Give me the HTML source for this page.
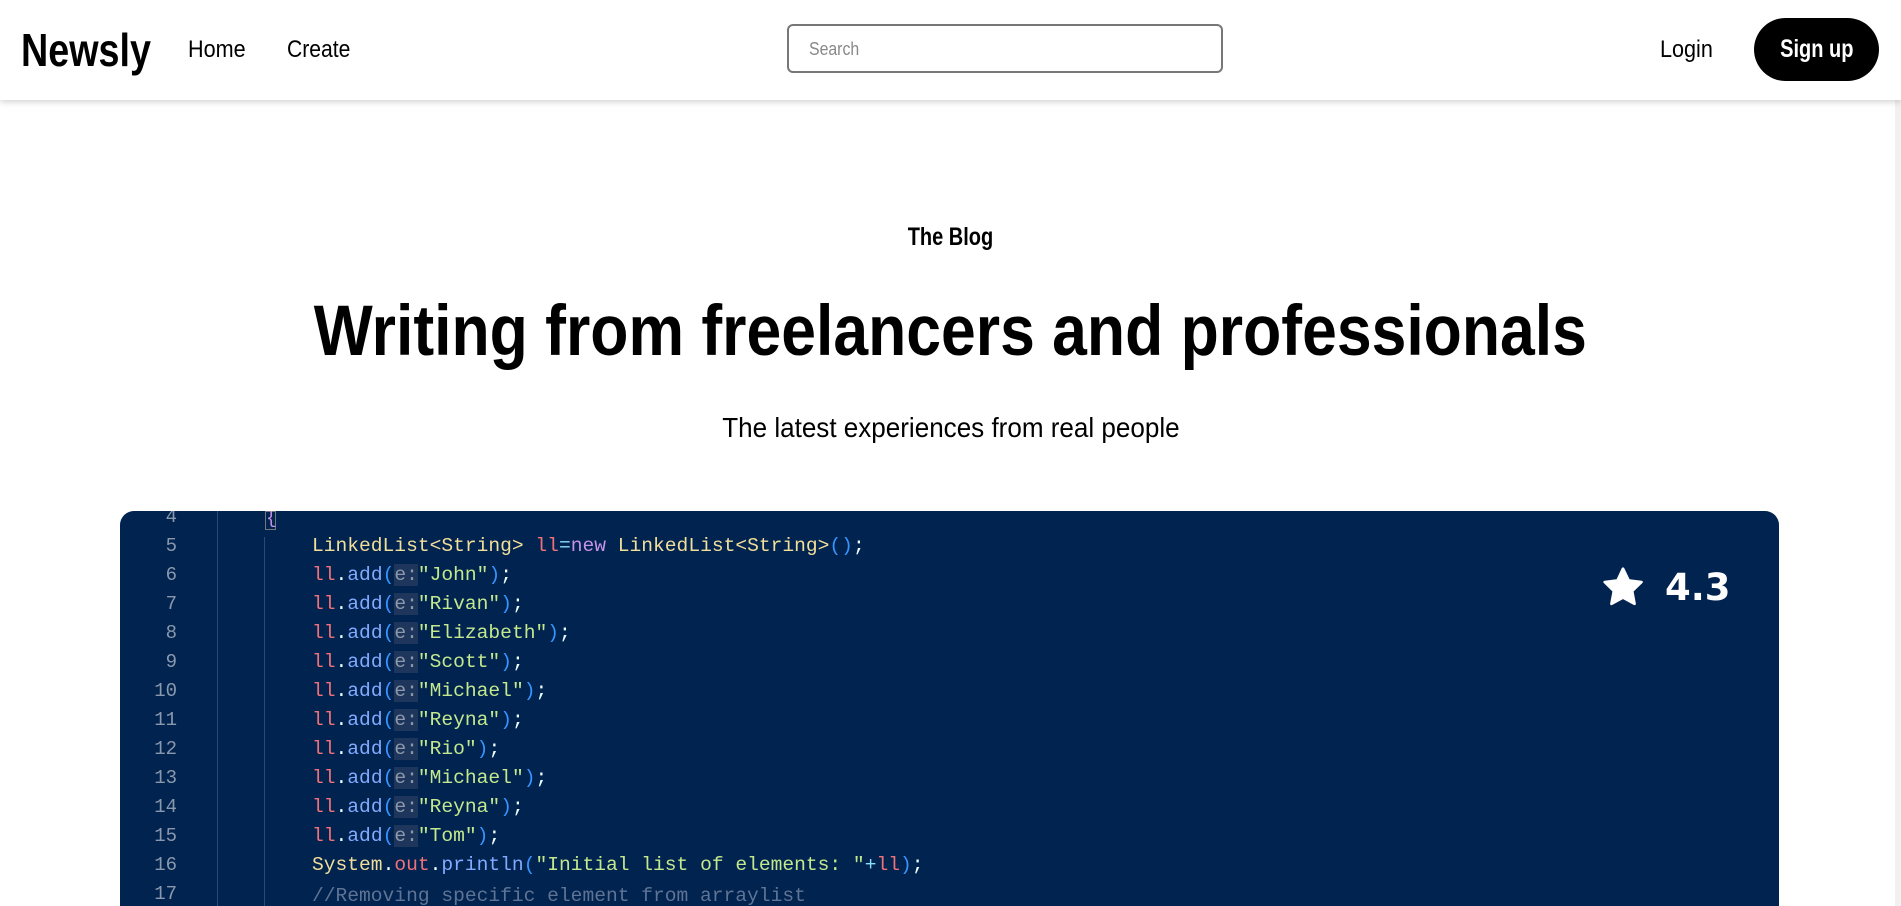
<!DOCTYPE html>
<html><head><meta charset="utf-8"><style>
*{margin:0;padding:0;box-sizing:border-box}
html,body{width:1901px;height:906px;overflow:hidden;background:#fff;font-family:"Liberation Sans",sans-serif;color:#000;position:relative}
.n{display:inline-block;transform-origin:left center;white-space:nowrap}
.nc{display:inline-block;transform-origin:center center;white-space:nowrap}
.nav{position:absolute;left:0;top:0;width:1901px;height:100px;background:#fff;box-shadow:0 2px 6px rgba(0,0,0,.18);z-index:2}
.logo{position:absolute;left:21px;top:20px;font-size:46px;font-weight:bold;line-height:60px}
.nl{position:absolute;top:35px;font-size:24px;line-height:30px}
.search{position:absolute;left:787px;top:24px;width:436px;height:49px;border:2px solid #777;border-radius:6px;font-size:18px;color:#888;padding:12px 0 0 20px;line-height:22px}
.btn{position:absolute;left:1754px;top:18px;width:125px;height:63px;background:#000;border-radius:32px;color:#fff;font-weight:bold;font-size:25px;text-align:center;line-height:63px}
.sb{position:absolute;right:0;top:0;width:6px;height:906px;background:#f1f1f1}
.c{position:absolute;left:0;width:1901px;text-align:center}
.code{position:absolute;left:120px;top:511px;width:1659px;height:395px;background:#00234f;border-radius:14px 14px 0 0;overflow:hidden;font-family:"Liberation Mono",monospace;font-size:19.6px}
.ln{position:absolute;left:0;width:57px;text-align:right;color:#8a98ad;font-size:19px}
.g{position:absolute;top:0;width:1px;height:395px;background:#2f4a72}
.l{position:absolute;left:192px;white-space:pre;color:#eeffff}
.y{color:#f2df9a}.r{color:#f07178}.cy{color:#89ddff}.p{color:#c792ea}.b{color:#82aaff}.pb{color:#3794ff}.s{color:#c3e88d}.h{background:#1e365c;color:#8d99aa}.cm{color:#5f7394}
</style></head><body>
<div class="nav">
<div class="logo"><span class="n" style="transform:scaleX(.82)">Newsly</span></div>
<div class="nl" style="left:188px"><span class="n" style="transform:scaleX(.9)">Home</span></div>
<div class="nl" style="left:287px"><span class="n" style="transform:scaleX(.88)">Create</span></div>
<div class="search"><span class="n" style="transform:scaleX(.88)">Search</span></div>
<div class="nl" style="left:1660px"><span class="n" style="transform:scaleX(.9)">Login</span></div>
<div class="btn"><span class="nc" style="transform:scaleX(.8)">Sign up</span></div>
</div>
<div class="sb"></div>
<div class="c" style="top:223px;font-size:25px;font-weight:bold"><span class="nc" style="transform:scaleX(.8)">The Blog</span></div>
<div class="c" style="top:287px;font-size:71px;font-weight:bold;line-height:90px"><span class="nc" style="transform:scaleX(.88)">Writing from freelancers and professionals</span></div>
<div class="c" style="top:412px;font-size:28px"><span class="nc" style="transform:scaleX(.93)">The latest experiences from real people</span></div>
<div class="code">
<div class="g" style="left:97px"></div><div class="g" style="left:144px;top:26px;height:369px"></div>
<div style="position:absolute;left:145px;top:0;width:11px;height:19px;border:1px solid #777;color:#c792ea;font-size:18px;line-height:14px;text-align:center">{</div>
<div class="ln" style="top:-5px">4</div>
<div class="ln" style="top:24px">5</div><div class="l" style="top:24px"><span class="y">LinkedList&lt;String&gt;</span> <span class="r">ll</span><span class="cy">=</span><span class="p">new</span> <span class="y">LinkedList&lt;String&gt;</span><span class="pb">()</span>;</div>
<div class="ln" style="top:53px">6</div><div class="l" style="top:53px"><span class="r">ll</span>.<span class="b">add</span><span class="pb">(</span><span class="h">e:</span><span class="s">"John"</span><span class="pb">)</span>;</div>
<div class="ln" style="top:82px">7</div><div class="l" style="top:82px"><span class="r">ll</span>.<span class="b">add</span><span class="pb">(</span><span class="h">e:</span><span class="s">"Rivan"</span><span class="pb">)</span>;</div>
<div class="ln" style="top:111px">8</div><div class="l" style="top:111px"><span class="r">ll</span>.<span class="b">add</span><span class="pb">(</span><span class="h">e:</span><span class="s">"Elizabeth"</span><span class="pb">)</span>;</div>
<div class="ln" style="top:140px">9</div><div class="l" style="top:140px"><span class="r">ll</span>.<span class="b">add</span><span class="pb">(</span><span class="h">e:</span><span class="s">"Scott"</span><span class="pb">)</span>;</div>
<div class="ln" style="top:169px">10</div><div class="l" style="top:169px"><span class="r">ll</span>.<span class="b">add</span><span class="pb">(</span><span class="h">e:</span><span class="s">"Michael"</span><span class="pb">)</span>;</div>
<div class="ln" style="top:198px">11</div><div class="l" style="top:198px"><span class="r">ll</span>.<span class="b">add</span><span class="pb">(</span><span class="h">e:</span><span class="s">"Reyna"</span><span class="pb">)</span>;</div>
<div class="ln" style="top:227px">12</div><div class="l" style="top:227px"><span class="r">ll</span>.<span class="b">add</span><span class="pb">(</span><span class="h">e:</span><span class="s">"Rio"</span><span class="pb">)</span>;</div>
<div class="ln" style="top:256px">13</div><div class="l" style="top:256px"><span class="r">ll</span>.<span class="b">add</span><span class="pb">(</span><span class="h">e:</span><span class="s">"Michael"</span><span class="pb">)</span>;</div>
<div class="ln" style="top:285px">14</div><div class="l" style="top:285px"><span class="r">ll</span>.<span class="b">add</span><span class="pb">(</span><span class="h">e:</span><span class="s">"Reyna"</span><span class="pb">)</span>;</div>
<div class="ln" style="top:314px">15</div><div class="l" style="top:314px"><span class="r">ll</span>.<span class="b">add</span><span class="pb">(</span><span class="h">e:</span><span class="s">"Tom"</span><span class="pb">)</span>;</div>
<div class="ln" style="top:343px">16</div><div class="l" style="top:343px"><span class="y">System</span>.<span class="r">out</span>.<span class="b">println</span><span class="pb">(</span><span class="s">"Initial list of elements: "</span><span class="cy">+</span><span class="r">ll</span><span class="pb">)</span>;</div>
<div class="ln" style="top:372px">17</div><div class="l cm" style="top:374px">//Removing specific element from arraylist</div>
<svg style="position:absolute;left:1481px;top:55px" width="44" height="42" viewBox="0 0 24 23"><path d="M12 1.5l3.1 6.4 7 .9-5.1 4.9 1.3 7-6.3-3.4-6.3 3.4 1.3-7L2 8.8l7-.9z" fill="#fff" stroke="#fff" stroke-width="1.5" stroke-linejoin="round"/></svg>
<div style="position:absolute;left:1545px;top:53px;font-family:'DejaVu Sans','Liberation Sans',sans-serif;font-weight:bold;font-size:37px;color:#fff;line-height:48px">4.3</div>
</div>
</body></html>
